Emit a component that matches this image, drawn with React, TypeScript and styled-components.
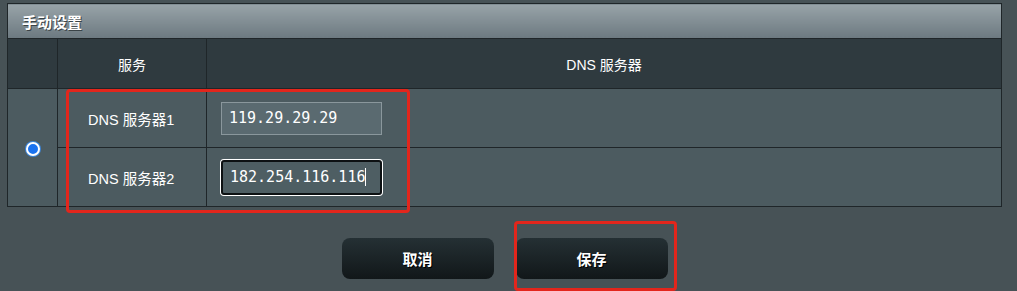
import React from 'react';
import styled, { createGlobalStyle } from 'styled-components';

const GlobalStyle = createGlobalStyle`
  html, body {
    margin: 0;
    padding: 0;
    background-color: #475256;
    font-family: Arial, "Liberation Sans", "Noto Sans CJK SC", sans-serif;
  }
`;

const Page = styled.div`
  position: relative;
  width: 1017px;
  height: 291px;
  padding: 3px 0 0 7px;
  box-sizing: border-box;
  overflow: hidden;
`;

const Table = styled.table`
  width: 995px;
  border-collapse: collapse;
  table-layout: fixed;
  color: #ffffff;
  font-size: 14px;
`;

const TitleCell = styled.th`
  height: 34px;
  padding: 0 0 0 14px;
  text-align: left;
  font-weight: bold;
  font-size: 15px;
  background: linear-gradient(to bottom, #98a3a8 0%, #6c7980 100%);
  border: 1px solid #1f2629;
  text-shadow: 1px 1px 0 #3a4347;
`;

const HeadCell = styled.th`
  height: 49px;
  padding: 0;
  font-weight: normal;
  background-color: #2f3a3f;
  border: 1px solid #1f2629;
  text-align: center;
`;

const Cell = styled.td<{ $pad?: number }>`
  height: 58px;
  padding: 0 0 0 ${p => p.$pad ?? 14}px;
  background-color: #4c5b60;
  border: 1px solid #1f2629;
  vertical-align: middle;
`;

const Label = styled(Cell)`
  font-size: 14.5px;
`;

const RadioCell = styled.td`
  padding: 0;
  background-color: #4c5b60;
  border: 1px solid #1f2629;
  text-align: center;
`;

const Radio = styled.span`
  display: inline-block;
  width: 10px;
  height: 10px;
  border-radius: 50%;
  background: #1a73f0;
  border: 2px solid #ffffff;
  box-shadow: 0 0 0 1px #3d86d8;
  vertical-align: middle;
`;

const TextInput = styled.input<{ $focused?: boolean }>`
  box-sizing: border-box;
  width: 161px;
  height: ${p => (p.$focused ? '35px' : '33px')};
  padding: 0 7px;
  font-family: "DejaVu Sans Mono", "Liberation Mono", monospace;
  font-size: 15px;
  color: #ffffff;
  background-color: ${p => (p.$focused ? '#4e5e63' : '#5a6a70')};
  border: ${p => (p.$focused ? '2px solid #0d1113' : '1px solid #8a979c')};
  border-radius: ${p => (p.$focused ? '3px' : '0')};
  box-shadow: ${p => (p.$focused ? '0 0 0 1px #ffffff' : 'none')};
  outline: none;
`;

const Caret = styled.span`
  display: inline-block;
  width: 1px;
  height: 18px;
  background: #ffffff;
`;

const FocusedField = styled.div`
  position: relative;
  display: inline-block;
`;

const CaretPos = styled.div`
  position: absolute;
  left: 144px;
  top: 8px;
`;

const ButtonRow = styled.div`
  display: flex;
  justify-content: center;
  gap: 22px;
  width: 995px;
  margin-top: 31px;
`;

const Button = styled.button`
  width: 152px;
  height: 41px;
  border: none;
  border-radius: 8px;
  background: linear-gradient(to bottom, #253034 0%, #111719 100%);
  color: #ffffff;
  font-family: Arial, "Noto Sans CJK SC", sans-serif;
  font-weight: bold;
  font-size: 15px;
  text-shadow: 1px 1px 0 #000000;
  cursor: pointer;
`;

const Mark = styled.div`
  position: absolute;
  border: 3px solid #e3261c;
  border-radius: 4px;
  box-sizing: border-box;
`;

export default function App() {
  return (
    <>
      <GlobalStyle />
      <Page>
        <Table>
          <colgroup>
            <col style={{ width: 50 }} />
            <col style={{ width: 149 }} />
            <col />
          </colgroup>
          <thead>
            <tr>
              <TitleCell colSpan={3}>手动设置</TitleCell>
            </tr>
            <tr>
              <HeadCell></HeadCell>
              <HeadCell>服务</HeadCell>
              <HeadCell>DNS 服务器</HeadCell>
            </tr>
          </thead>
          <tbody>
            <tr>
              <RadioCell rowSpan={2}>
                <Radio />
              </RadioCell>
              <Label $pad={30}>DNS 服务器1</Label>
              <Cell>
                <TextInput defaultValue="119.29.29.29" readOnly />
              </Cell>
            </tr>
            <tr>
              <Label $pad={30}>DNS 服务器2</Label>
              <Cell>
                <FocusedField>
                  <TextInput $focused defaultValue="182.254.116.116" readOnly />
                  <CaretPos><Caret /></CaretPos>
                </FocusedField>
              </Cell>
            </tr>
          </tbody>
        </Table>
        <ButtonRow>
          <Button>取消</Button>
          <Button>保存</Button>
        </ButtonRow>
        <Mark style={{ left: 66, top: 89, width: 344, height: 124 }} />
        <Mark style={{ left: 514, top: 221, width: 163, height: 70 }} />
      </Page>
    </>
  );
}
